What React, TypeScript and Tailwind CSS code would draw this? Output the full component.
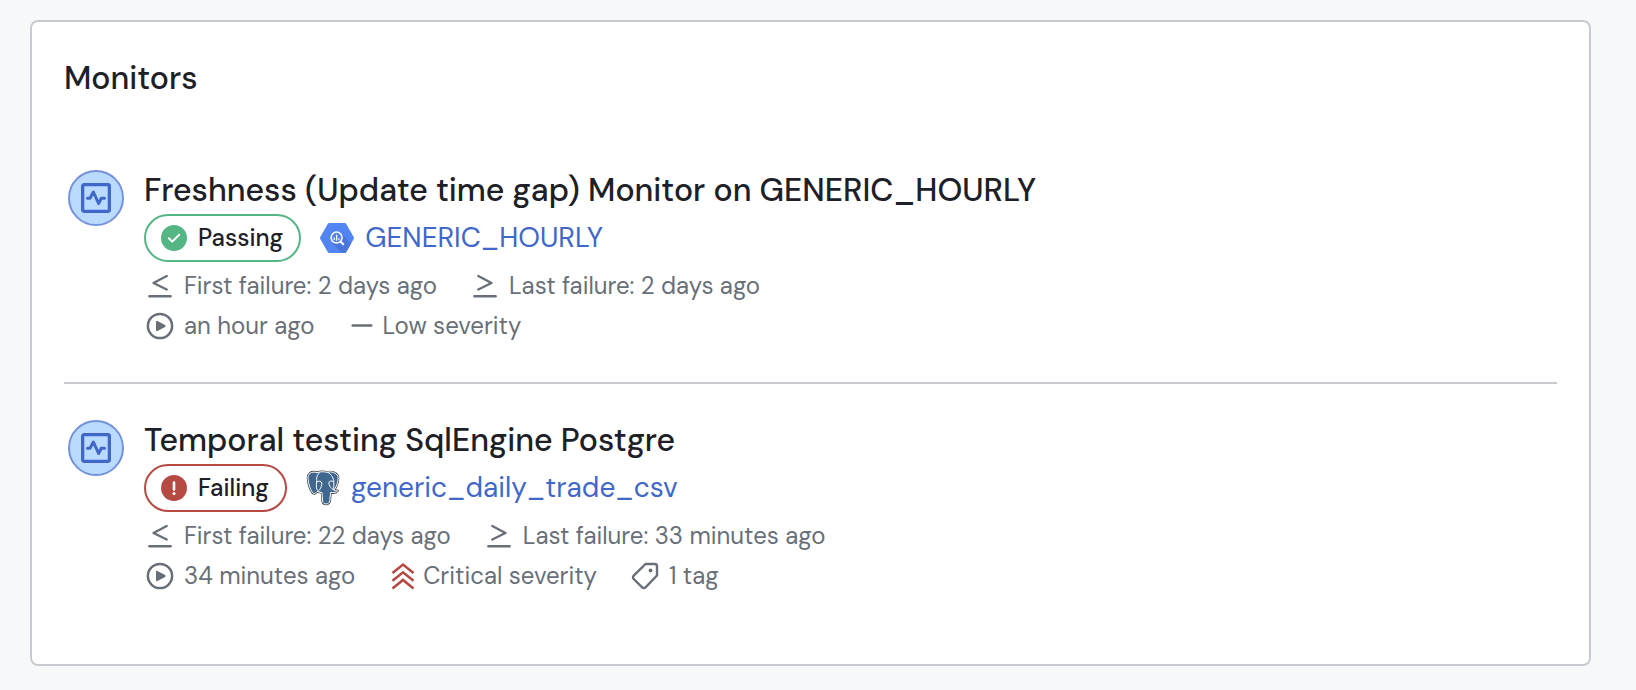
import React from "react";

type Severity = "low" | "critical";

interface Monitor {
  title: string;
  status: "passing" | "failing";
  source: "bigquery" | "postgres";
  table: string;
  firstFailure: string;
  lastFailure: string;
  lastRun: string;
  severity: Severity;
  tags?: string;
}

const monitors: Monitor[] = [
  {
    title: "Freshness (Update time gap) Monitor on GENERIC_HOURLY",
    status: "passing",
    source: "bigquery",
    table: "GENERIC_HOURLY",
    firstFailure: "2 days ago",
    lastFailure: "2 days ago",
    lastRun: "an hour ago",
    severity: "low",
  },
  {
    title: "Temporal testing SqlEngine Postgre",
    status: "failing",
    source: "postgres",
    table: "generic_daily_trade_csv",
    firstFailure: "22 days ago",
    lastFailure: "33 minutes ago",
    lastRun: "34 minutes ago",
    severity: "critical",
    tags: "1 tag",
  },
];

const MonitorIcon = () => (
  <svg viewBox="0 0 30 30" className="size-[30px]" fill="none" stroke="#4167c9" strokeWidth="3.3" strokeLinejoin="round" strokeLinecap="round">
    <rect x="1.65" y="1.65" width="26.7" height="26.7" rx="1.5" />
    <path d="M6.5 15.3H9l3.4-6.3 5.2 11.5 2.700-5.200h3.200" strokeWidth="3" />
  </svg>
);

const CheckIcon = () => (
  <svg viewBox="0 0 26 26" className="size-[26px]" fill="none">
    <circle cx="13" cy="13" r="13" fill="#54b585" />
    <path d="M7.900 13.200l3.400 3.400 6.900-6.900" stroke="#fff" strokeWidth="2" strokeLinecap="round" strokeLinejoin="round" />
  </svg>
);

const AlertIcon = () => (
  <svg viewBox="0 0 26 26" className="size-[26px]" fill="none">
    <circle cx="13" cy="13" r="13" fill="#b54a43" />
    <path d="M13 7.500v7" stroke="#fff" strokeWidth="2.600" strokeLinecap="round" />
    <circle cx="13" cy="18.600" r="1.500" fill="#fff" />
  </svg>
);

const BigQueryLogo = () => (
  <svg viewBox="0 0 34 30" className="h-[30px] w-[34px]" fill="none">
    <path d="M9.200 0h15.600c.6 0 1.200.3 1.500.9l7.400 13.200c.3.6.3 1.200 0 1.800l-7.400 13.200c-.3.6-.9.9-1.500.9H9.200c-.6 0-1.200-.3-1.500-.9L.3 15.900a1.800 1.800 0 0 1 0-1.800L7.700.9C8 .3 8.600 0 9.200 0z" fill="#5385f2" />
    <path d="M21.500 10.500l9.500 10.300-4.700 8.300c-.3.6-.9.9-1.500.9h-3.300L13 20.500z" fill="#4a76dc" />
    <circle cx="16.600" cy="14.600" r="5.500" fill="#5385f2" stroke="#fff" strokeWidth="1.500" />
    <path d="M20.800 18.800l2.400 2.400" stroke="#fff" strokeWidth="2" strokeLinecap="round" />
    <path d="M14.300 14.500v2.400M16.600 11.800v6M18.900 15.200v1.700" stroke="#fff" strokeWidth="1.200" />
  </svg>
);

const PostgresLogo = () => (
  <svg viewBox="0 0 34 36" className="h-9 w-[34px]" fill="#40678f" strokeLinejoin="round" strokeLinecap="round">
    <g stroke="#3c4148" strokeWidth="2.400">
      <path d="M11 2.500C5 1 1.500 3.500 2 9c.4 4.500 2 10 4.300 13.300 1.700 2.300 3.200 1 4.700-.8l5 1.200.6 8.500c.4 3.700 6.500 3.900 7.200-.4l.9-8.500c2.800.8 5.800.2 7-1.600-1.500.2-3-.1-3.500-1 3-4 4.500-10.200 3.700-13.500C30.500 2.700 25 1 21 2.300c-3-.8-7-.8-10 .2z" />
    </g>
    <g stroke="#fff" strokeWidth="1">
      <path d="M11 2.500C5 1 1.500 3.500 2 9c.4 4.500 2 10 4.300 13.300 1.700 2.300 3.200 1 4.700-.8l5 1.200.6 8.500c.4 3.700 6.500 3.900 7.200-.4l.9-8.500c2.800.8 5.800.2 7-1.600-1.500.2-3-.1-3.500-1 3-4 4.500-10.200 3.700-13.500C30.500 2.700 25 1 21 2.300c-3-.8-7-.8-10 .2z" />
      <path d="M13.500 2.700c-2.800 2.300-3.200 5.800-2.800 9.300-.3 3-.6 5 .2 7.500l2.100 2" fill="none" />
      <path d="M10.800 11.800c1.800-1.200 4.700-.8 5 1.200.3 2.500-.9 4.800-2.300 7" fill="none" />
      <path d="M22 2.500c4 2 5.600 6 5.800 9.500.2 3-.6 5.300.4 8.200M27.700 11.500c-2-1-4.800-.8-4.800 1.500 0 2.500 1.700 4.200 3 5.700l2.300 1.500" fill="none" />
    </g>
  </svg>
);

const FirstFailureIcon = () => (
  <svg viewBox="0 0 24 24" className="size-6" fill="none" stroke="#696f78" strokeWidth="2.400" strokeLinecap="round" strokeLinejoin="round">
    <path d="M18.700 2L5.500 9l13.200 6.500M1.300 22.300h21.400" />
  </svg>
);

const LastFailureIcon = () => (
  <svg viewBox="0 0 24 24" className="size-6" fill="none" stroke="#696f78" strokeWidth="2.400" strokeLinecap="round" strokeLinejoin="round">
    <path d="M5.300 2l13.200 7-13.200 6.500M1.300 22.300h21.400" />
  </svg>
);

const RunIcon = () => (
  <svg viewBox="0 0 28 28" className="size-7" fill="none" stroke="#696f78">
    <circle cx="14" cy="14" r="12.100" strokeWidth="2.500" />
    <path d="M11 9.800v8.400l7.600-4.200z" fill="#696f78" strokeWidth="2" strokeLinejoin="round" />
  </svg>
);

const LowIcon = () => (
  <svg viewBox="0 0 24 24" className="size-6" fill="none" stroke="#696f78" strokeWidth="2.400" strokeLinecap="round">
    <path d="M2.700 11.500h18.600" />
  </svg>
);

const CriticalIcon = () => (
  <svg viewBox="0 0 24 28" className="h-7 w-6" fill="none" stroke="#b54a43" strokeWidth="2.600">
    <path d="M1.500 11L12 2.600 22.500 11M1.500 18.700L12 10.300l10.500 8.400M1.500 26.400L12 18l10.500 8.400" />
  </svg>
);

const TagIcon = () => (
  <svg viewBox="0 0 28 28" className="size-7" fill="none">
    <path d="M14.500 2h9.300a2.200 2.200 0 0 1 2.200 2.200v9.300L14.500 25.300a2.400 2.400 0 0 1-3.400 0L2.700 17a2.400 2.400 0 0 1 0-3.400z" stroke="#696f78" strokeWidth="2.400" strokeLinejoin="round" />
    <circle cx="19.500" cy="8.500" r="1.900" fill="#696f78" />
  </svg>
);

const Meta = ({ icon, tight, children }: { icon: React.ReactNode; tight?: boolean; children: React.ReactNode }) => (
  <span className={tight ? "flex items-center gap-1" : "flex items-center gap-2"}>
    <span className="flex w-8 shrink-0 justify-center">{icon}</span>
    <span>{children}</span>
  </span>
);

const StatusBadge = ({ status }: { status: Monitor["status"] }) => {
  const passing = status === "passing";
  return (
    <span
      className={`flex h-12 items-center gap-2 rounded-full border-2 pr-4 pl-3 text-2xl font-medium ${
        passing ? "border-[#54b585]" : "border-[#b54a43]"
      }`}
    >
      <span className="flex w-8 justify-center">{passing ? <CheckIcon /> : <AlertIcon />}</span>
      {passing ? "Passing" : "Failing"}
    </span>
  );
};

const MonitorItem = ({ monitor }: { monitor: Monitor }) => (
  <li className="flex gap-5 py-9 pl-1">
    <div className="flex size-14 shrink-0 items-center justify-center rounded-full border-2 border-[#7592de] bg-[#badbff]">
      <MonitorIcon />
    </div>
    <div className="min-w-0 flex-1">
      <h3 className="text-[32px] leading-10 font-medium">{monitor.title}</h3>
      <div className="mt-1 flex flex-wrap items-center gap-4">
        <StatusBadge status={monitor.status} />
        <a href="#" className="flex items-center gap-2 text-[28px] leading-10 text-[#4167c9]">
          <span className="flex w-10 justify-center">
            {monitor.source === "bigquery" ? <BigQueryLogo /> : <PostgresLogo />}
          </span>
          {monitor.table}
        </a>
      </div>
      <div className="mt-1 text-2xl leading-10 text-[#696f78]">
        <div className="flex flex-wrap gap-x-8">
          <Meta icon={<FirstFailureIcon />}>First failure: {monitor.firstFailure}</Meta>
          <Meta icon={<LastFailureIcon />}>Last failure: {monitor.lastFailure}</Meta>
        </div>
        <div className="flex flex-wrap gap-x-8">
          <Meta icon={<RunIcon />}>{monitor.lastRun}</Meta>
          {monitor.severity === "low" ? (
            <Meta icon={<LowIcon />} tight>Low severity</Meta>
          ) : (
            <Meta icon={<CriticalIcon />} tight>Critical severity</Meta>
          )}
          {monitor.tags && <Meta icon={<TagIcon />}>{monitor.tags}</Meta>}
        </div>
      </div>
    </div>
  </li>
);

const App = () => {
  return (
    <main className="min-h-screen bg-[#f7f8fa] py-5 pr-[45px] pl-[30px] font-['DM_Sans','Inter',sans-serif] text-[#1d2027]">
      <section className="rounded-lg border-2 border-[#c7cad1] bg-white p-8">
        <h2 className="mb-8 text-[32px] leading-[48px] font-medium">Monitors</h2>
        <ul className="divide-y-2 divide-[#c7c9ce]">
          {monitors.map((monitor) => (
            <MonitorItem key={monitor.title} monitor={monitor} />
          ))}
        </ul>
      </section>
    </main>
  );
};

export default App;
